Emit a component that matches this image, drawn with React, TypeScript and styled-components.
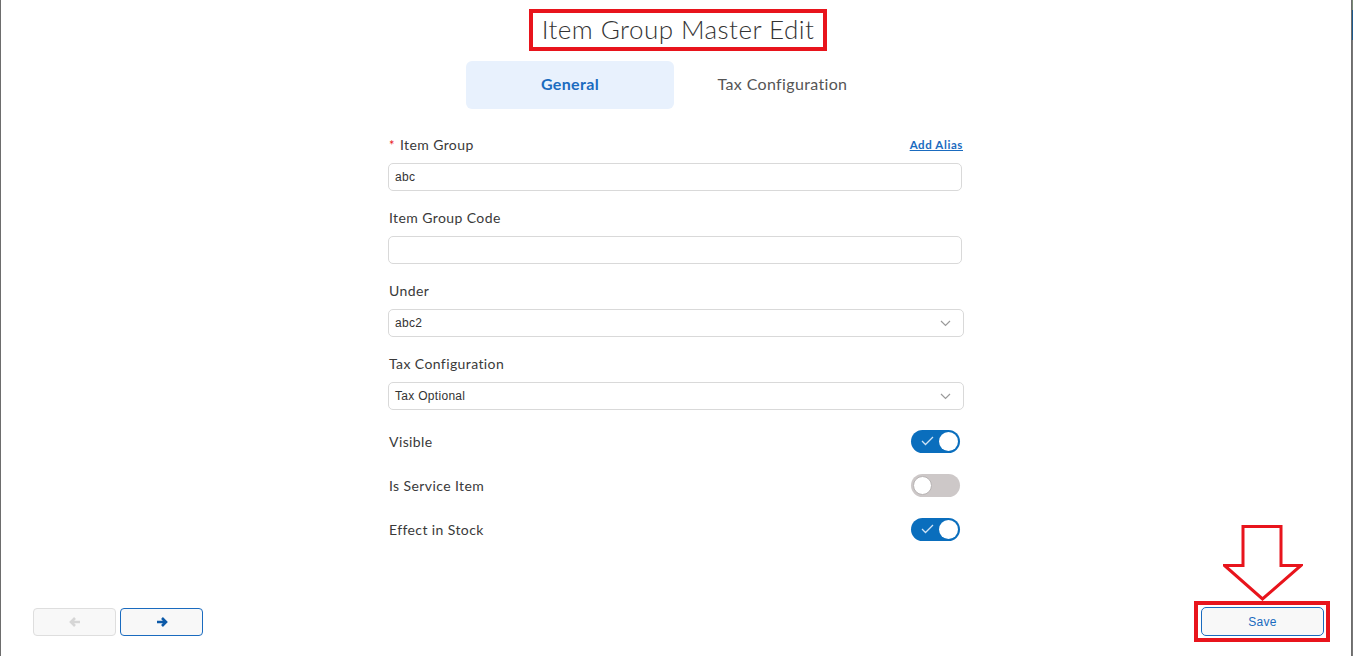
import React from "react";
import styled, { createGlobalStyle } from "styled-components";

const GlobalStyle = createGlobalStyle`
    html, body {
        margin: 0;
        padding: 0;
        background: #ffffff;
    }
    body {
        font-family: "Lato", "Open Sans", sans-serif;
        color: #333;
    }
`;

const Backdrop = styled.div`
    height: 656px;
    display: flex;
    background: linear-gradient(to bottom, #7a8a78 0, #7a8a78 10px, #1d5a8c 10px, #1d5a8c 40px, #777 40px);
    padding-right: 1px;
`;

const Modal = styled.div`
    position: relative;
    flex: 1;
    display: flex;
    flex-direction: column;
    align-items: center;
    background: #fff;
    border-left: 1px solid #6d6d6d;
    border-right: 1px solid #6d6d6d;
`;

const TitleBox = styled.h1`
    margin: 9px 0 0 4px;
    width: 298px;
    height: 42px;
    box-sizing: border-box;
    border: 4px solid #e8141c;
    padding-bottom: 3px;
    display: flex;
    align-items: center;
    justify-content: center;
    font-family: "Lato", sans-serif;
    font-weight: 300;
    font-size: 26px;
    color: #333;
    letter-spacing: 0.45px;
`;

const TabBar = styled.div`
    margin: 10px 4px 0 0;
    display: flex;
`;

const Tab = styled.div<{ $active?: boolean }>`
    width: 208px;
    height: 48px;
    box-sizing: border-box;
    display: flex;
    align-items: center;
    justify-content: center;
    padding: ${p => (p.$active ? "0 0 3px" : "0 0 3px 9px")};
    border-radius: 6px;
    font-size: 16px;
    letter-spacing: 0.35px;
    font-weight: ${p => (p.$active ? 700 : 400)};
    color: ${p => (p.$active ? "#1a6bbf" : "#555")};
    background: ${p => (p.$active ? "#e8f1fd" : "transparent")};
`;

const Form = styled.div`
    width: 576px;
    margin-top: 25px;
    display: flex;
    flex-direction: column;
`;

const Field = styled.div`
    display: flex;
    flex-direction: column;
    margin-bottom: 16px;
`;

const LabelRow = styled.div`
    height: 20px;
    display: flex;
    align-items: center;
    justify-content: space-between;
    margin-bottom: 9px;
    padding: 0 1px;
`;

const Label = styled.label`
    font-size: 14px;
    letter-spacing: 0.4px;
    color: #3a3a3a;
`;

const Required = styled.span`
    color: #e8141c;
    margin-right: 5px;
    font-size: 13px;
`;

const AliasLink = styled.a`
    font-size: 11.5px;
    font-weight: 700;
    letter-spacing: 0.6px;
    color: #1a6bbf;
    text-decoration: underline;
    cursor: pointer;
`;

const TextBox = styled.div<{ $narrow?: boolean }>`
    height: 28px;
    width: ${p => (p.$narrow ? "574px" : "576px")};
    box-sizing: border-box;
    border: 1px solid #d9d9d9;
    border-radius: 5px;
    display: flex;
    align-items: center;
    justify-content: space-between;
    padding: 0 12px 0 6px;
    font-family: "Liberation Sans", Arial, sans-serif;
    font-size: 12px;
    letter-spacing: 0.3px;
    color: #333;
`;

const ToggleList = styled.div`
    margin-top: 3px;
    display: flex;
    flex-direction: column;
    gap: 20px;
`;

const ToggleRow = styled.div`
    height: 24px;
    display: flex;
    align-items: center;
    justify-content: space-between;
    padding: 0 4px 0 1px;
`;

const ToggleTrack = styled.div<{ $on?: boolean }>`
    width: 49px;
    height: 23px;
    border-radius: 12px;
    box-sizing: border-box;
    background: ${p => (p.$on ? "#0a6ebd" : "#cdc8c8")};
    display: flex;
    align-items: center;
    justify-content: ${p => (p.$on ? "space-between" : "flex-start")};
    padding: 0 2px 0 ${p => (p.$on ? "10px" : "2px")};
`;

const Knob = styled.div<{ $off?: boolean }>`
    width: 19px;
    height: 19px;
    border-radius: 50%;
    background: #fff;
    box-sizing: border-box;
    border: ${p => (p.$off ? "1px solid #b8b4b4" : "none")};
`;

const Footer = styled.div`
    margin-top: auto;
    width: 100%;
    box-sizing: border-box;
    display: flex;
    align-items: center;
    justify-content: space-between;
    padding: 0 21px 14px 32px;
`;

const NavGroup = styled.div`
    display: flex;
    gap: 4px;
`;

const NavButton = styled.button<{ $disabled?: boolean }>`
    width: 83px;
    height: 28px;
    border-radius: 4px;
    background: #f8f8f8;
    border: 1px solid ${p => (p.$disabled ? "#dedede" : "#1a6bbf")};
    display: flex;
    align-items: center;
    justify-content: center;
    padding: 0;
`;

const SaveFrame = styled.div`
    position: relative;
    border: 4px solid #e8141c;
    padding: 2px 2px 2px 3px;
`;

const SaveButton = styled.button`
    width: 123px;
    height: 29px;
    border-radius: 5px;
    background: #f8f8f8;
    border: 1px solid #1a6bbf;
    color: #1a6bbf;
    font-family: "Liberation Sans", Arial, sans-serif;
    font-size: 12px;
    letter-spacing: 0.3px;
    display: block;
`;

const Pointer = styled.svg`
    position: absolute;
    left: 25px;
    top: -80px;
`;

const Chevron = () => (
    <svg width="11" height="7" viewBox="0 0 11 7">
        <path d="M1 1l4.5 4.5L10 1" fill="none" stroke="#9a9a9a" strokeWidth="1.2" />
    </svg>
);

const Check = () => (
    <svg width="13" height="10" viewBox="0 0 13 10">
        <path d="M1 5l3.5 3.5L12 1" fill="none" stroke="#cfe3f5" strokeWidth="1.3" />
    </svg>
);

const Arrow = ({ dir, color }: { dir: "left" | "right"; color: string }) => (
    <svg width="12" height="12" viewBox="0 0 12 12" style={{ transform: dir === "left" ? "scaleX(-1)" : undefined }}>
        <path d="M1 6h8M6 2l4 4-4 4" fill="none" stroke={color} strokeWidth="2.6" strokeLinejoin="miter" />
    </svg>
);

const Toggle = ({ on }: { on?: boolean }) => (
    <ToggleTrack $on={on}>
        {on && <Check />}
        <Knob $off={!on} />
    </ToggleTrack>
);

const App = () =>
(
    <>
        <GlobalStyle />
        <Backdrop>
            <Modal>
                <TitleBox>Item Group Master Edit</TitleBox>
                <TabBar>
                    <Tab $active>General</Tab>
                    <Tab>Tax Configuration</Tab>
                </TabBar>
                <Form>
                    <Field>
                        <LabelRow>
                            <Label><Required>*</Required>Item Group</Label>
                            <AliasLink>Add Alias</AliasLink>
                        </LabelRow>
                        <TextBox $narrow>abc</TextBox>
                    </Field>
                    <Field>
                        <LabelRow>
                            <Label>Item Group Code</Label>
                        </LabelRow>
                        <TextBox $narrow />
                    </Field>
                    <Field>
                        <LabelRow>
                            <Label>Under</Label>
                        </LabelRow>
                        <TextBox>abc2<Chevron /></TextBox>
                    </Field>
                    <Field>
                        <LabelRow>
                            <Label>Tax Configuration</Label>
                        </LabelRow>
                        <TextBox>Tax Optional<Chevron /></TextBox>
                    </Field>
                    <ToggleList>
                        <ToggleRow>
                            <Label>Visible</Label>
                            <Toggle on />
                        </ToggleRow>
                        <ToggleRow>
                            <Label>Is Service Item</Label>
                            <Toggle />
                        </ToggleRow>
                        <ToggleRow>
                            <Label>Effect in Stock</Label>
                            <Toggle on />
                        </ToggleRow>
                    </ToggleList>
                </Form>
                <Footer>
                    <NavGroup>
                        <NavButton $disabled><Arrow dir="left" color="#d6d6d6" /></NavButton>
                        <NavButton><Arrow dir="right" color="#0d5aa8" /></NavButton>
                    </NavGroup>
                    <SaveFrame>
                        <Pointer width="80" height="76" viewBox="0 0 80 76">
                            <path d="M20 1.5h38v39h20L39.5 74 1.5 40.5H20z" fill="#fff" stroke="#e8141c" strokeWidth="3" />
                        </Pointer>
                        <SaveButton>Save</SaveButton>
                    </SaveFrame>
                </Footer>
            </Modal>
        </Backdrop>
    </>
);

export default App;
